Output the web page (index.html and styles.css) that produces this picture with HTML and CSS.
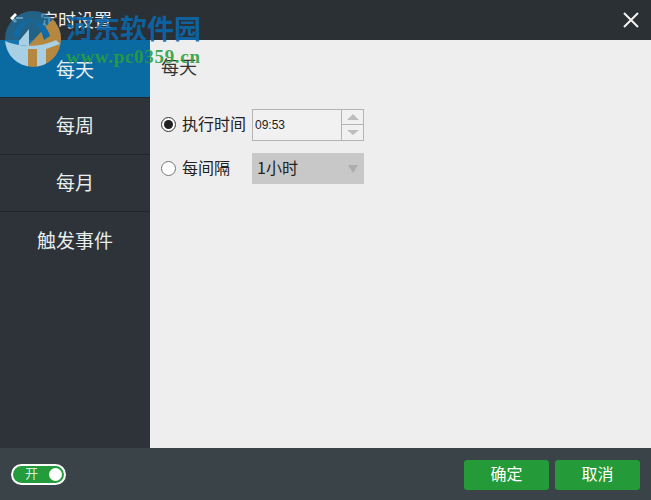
FILE: index.html
```html
<!DOCTYPE html>
<html lang="zh">
<head>
<meta charset="utf-8">
<title>定时设置</title>
<link rel="stylesheet" href="styles.css">
</head>
<body>
<div class="window">
  <header class="titlebar">
    <svg class="back" width="16" height="14" viewBox="0 0 16 14"><path d="M1 7 L6 2 L8 4 L5 7 L8 10 L6 12 Z" fill="#fff"/><path d="M7 6 H14 V8 H7 Z" fill="#fff"/></svg>
    <span class="title">定时设置</span>
    <svg class="close" width="16" height="16" viewBox="0 0 16 16"><path d="M1 1 L15 15 M15 1 L1 15" stroke="#f2f2f2" stroke-width="2" fill="none"/></svg>
  </header>
  <div class="main">
    <nav class="sidebar">
      <div class="tab active">每天</div>
      <div class="tab">每周</div>
      <div class="tab">每月</div>
      <div class="tab last">触发事件</div>
    </nav>
    <section class="content">
      <h2 class="heading">每天</h2>
      <div class="rows">
        <div class="row">
          <span class="radio checked"></span>
          <span class="label">执行时间</span>
          <div class="spin">
            <span class="spin-value">09:53</span>
            <div class="spin-btns">
              <div class="spin-btn"><span class="arrow up"></span></div>
              <div class="spin-btn"><span class="arrow down"></span></div>
            </div>
          </div>
        </div>
        <div class="row">
          <span class="radio"></span>
          <span class="label">每间隔</span>
          <div class="select">
            <span class="select-text">1小时</span>
            <span class="arrow select-arrow"></span>
          </div>
        </div>
      </div>
    </section>
  </div>
  <footer class="footer">
    <div class="toggle"><span class="toggle-text">开</span><span class="knob"></span></div>
    <div class="actions">
      <button class="btn">确定</button>
      <button class="btn">取消</button>
    </div>
  </footer>
  <div class="watermark">
    <svg class="wm-logo" width="58" height="58" viewBox="0 0 58 58">
      <defs><clipPath id="c"><circle cx="29" cy="29" r="28"/></clipPath></defs>
      <g clip-path="url(#c)">
        <rect width="58" height="30" fill="#1f76a8" fill-opacity=".72"/>
        <rect y="30" width="58" height="28" fill="#1a78b0" fill-opacity=".9"/>
        <path d="M50 8 L58 14 V58 H24 V36 Z" fill="#b5873f"/>
        <path d="M1 31 C14 37 36 38 52 30 L56 34 L42 39 V58 H33 V39 L24 39 V58 H6 L1 40 Z" fill="#a8cfe4"/>
        <path d="M15 31 L25 19 L25 36 L15 35 Z" fill="#a8cfe4"/>
        <path d="M9 26 C12 14 22 8 31 9 C23 11 16 18 14 28 Z" fill="#0f6aa5"/>
        <path d="M30 11 C38 12 44 18 46 26 L40 30 C38 22 35 17 30 11 Z" fill="#0f6aa5"/>
      </g>
    </svg>
    <div class="wm-text">
      <div class="wm-name">河东软件园</div>
      <div class="wm-url">www.pc0359.cn</div>
    </div>
  </div>
</div>
</body>
</html>
```
FILE: styles.css
```css
* { box-sizing: border-box; }
html, body { margin: 0; padding: 0; }
body { font-family: "Noto Sans CJK SC", "Liberation Sans", sans-serif; }
.window { position: relative; width: 651px; height: 500px; display: flex; flex-direction: column; overflow: hidden; background: #2c3237; }
.titlebar { height: 40px; flex: none; display: flex; align-items: center; padding: 0 12px 0 9px; background: #2b3035; color: #eee; }
.back { flex: none; margin-bottom: 4px; }
.title { font-size: 18px; margin-left: 15px; line-height: 24px; margin-bottom: 3px; }
.close { margin-left: auto; margin-bottom: 1px; }
.main { flex: 1; display: flex; min-height: 0; }
.sidebar { width: 150px; flex: none; background: #2d3338; }
.tab { height: 57px; display: flex; align-items: center; justify-content: center; padding-bottom: 3px; font-size: 19px; color: #e8eef0; border-bottom: 1px solid #212529; }
.active { height: 58px; padding-bottom: 1px; background: #0a6ba3; }
.last { border-bottom: 0; }
.content { flex: 1; background: #eeeeee; padding: 14px 0 0 11px; color: #222; }
.heading { margin: 0; font-size: 18px; font-weight: 400; line-height: 24px; color: #333; }
.rows { margin-top: 31px; display: flex; flex-direction: column; gap: 13px; }
.row { display: flex; align-items: center; height: 31px; }
.radio { width: 15px; height: 15px; border-radius: 50%; border: 1px solid #777; background: #fff; flex: none; display: flex; align-items: center; justify-content: center; }
.radio.checked { border-color: #333; }
.radio.checked::after { content: ""; width: 9px; height: 9px; border-radius: 50%; background: #222; }
.label { font-size: 16px; width: 70px; margin-left: 6px; padding-bottom: 3px; color: #222; white-space: nowrap; }
.spin { width: 112px; height: 32px; border: 1px solid #b4b4b4; background: #f1f1f1; display: flex; align-items: center; justify-content: space-between; font-family: "Liberation Sans", sans-serif; font-size: 12px; color: #222; }
.spin-value { padding-left: 2px; }
.spin-btns { width: 22px; height: 100%; display: flex; flex-direction: column; border-left: 1px solid #b4b4b4; }
.spin-btn { flex: 1; display: flex; align-items: center; justify-content: center; }
.spin-btn + .spin-btn { border-top: 1px solid #b4b4b4; }
.arrow { width: 0; height: 0; border-left: 6px solid transparent; border-right: 6px solid transparent; }
.up { border-bottom: 6px solid #bdbdbd; }
.down { border-top: 5px solid #bdbdbd; }
.select { width: 112px; height: 31px; background: #c8c8c8; display: flex; align-items: center; justify-content: space-between; padding: 0 6px 0 5px; font-size: 16px; color: #222; }
.select-text { padding-bottom: 3px; }
.select-arrow { border-left-width: 5px; border-right-width: 5px; border-top: 8px solid #adadad; }
.footer { height: 52px; flex: none; background: #3a4347; display: flex; align-items: center; justify-content: space-between; padding: 0 11px; }
.toggle { width: 55px; height: 21px; border: 2px solid #fff; border-radius: 11px; background: #249c3c; display: flex; align-items: center; justify-content: space-between; padding: 0 2px 0 12px; }
.toggle-text { font-size: 13px; color: #dcebdc; line-height: 1; padding-bottom: 3px; }
.knob { width: 13px; height: 13px; border-radius: 50%; background: #fff; }
.actions { display: flex; gap: 6px; margin-top: 1px; }
.btn { width: 85px; height: 30px; border: 0; border-radius: 3px; background: #249a38; color: #fff; font-family: inherit; font-size: 16px; padding: 0 0 3px; }
.watermark { position: absolute; left: 4px; top: 10px; display: flex; pointer-events: none; }
.wm-text { margin-left: 4px; }
.wm-name { font-weight: 700; font-size: 27px; line-height: 36px; color: rgba(10, 105, 175, .9); white-space: nowrap; }
.wm-url { font-family: "Liberation Serif", serif; font-weight: 700; font-size: 19px; line-height: 18px; letter-spacing: .7px; color: rgba(40, 160, 60, .9); white-space: nowrap; margin-top: 2px; }
```
